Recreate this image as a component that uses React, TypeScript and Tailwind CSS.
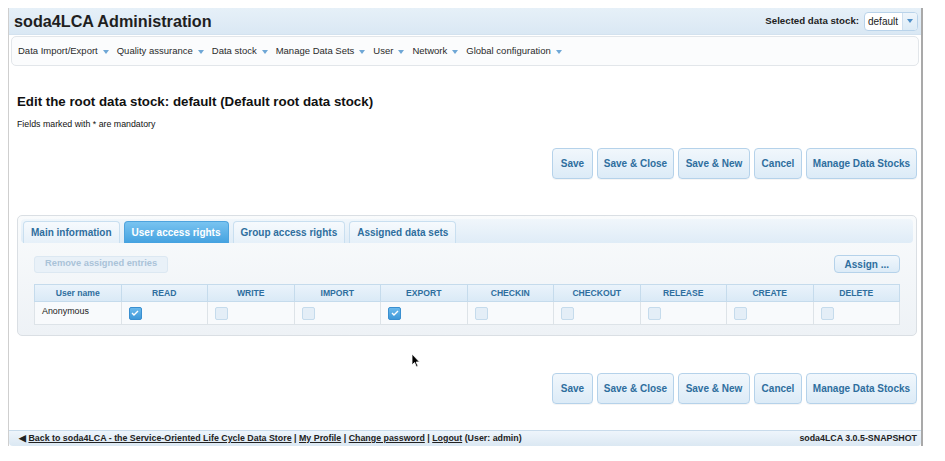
import React from 'react';

const menu = [
  'Data Import/Export',
  'Quality assurance',
  'Data stock',
  'Manage Data Sets',
  'User',
  'Network',
  'Global configuration',
];

const actions = [
  { label: 'Save', w: 'w-[41px]' },
  { label: 'Save & Close', w: 'w-[77px]' },
  { label: 'Save & New', w: 'w-[72px]' },
  { label: 'Cancel', w: 'w-[48px]' },
  { label: 'Manage Data Stocks', w: 'w-[111px]' },
];

const tabs = ['Main information', 'User access rights', 'Group access rights', 'Assigned data sets'];

const rights = ['READ', 'WRITE', 'IMPORT', 'EXPORT', 'CHECKIN', 'CHECKOUT', 'RELEASE', 'CREATE', 'DELETE'];
const granted = ['READ', 'EXPORT'];

function Caret() {
  return (
    <svg width="6" height="4" viewBox="0 0 6 4" className="ml-[5px] mt-[1px]">
      <path d="M0 0h6L3 4z" fill="#6fa7d6" />
    </svg>
  );
}

function ActionButtons() {
  return (
    <div className="flex justify-end gap-[4px] pr-[3px]">
      {actions.map((a) => (
        <button
          key={a.label}
          className={`${a.w} h-[31px] rounded-[4px] border border-[#b5d2ea] bg-[linear-gradient(#f1f7fc,#dcebf7)] text-[10px] font-bold text-[#2e6e9e] shadow-[0_1px_0_rgba(0,0,0,0.04)]`}
        >
          {a.label}
        </button>
      ))}
    </div>
  );
}

function Box({ checked }: { checked: boolean }) {
  if (checked) {
    return (
      <span className="flex h-[13px] w-[13px] items-center justify-center rounded-[2px] border border-[#3a8fd0] bg-[linear-gradient(#6bb9ec,#3e98d8)]">
        <svg width="8" height="6" viewBox="0 0 8 6">
          <path d="M1 3l2 2 4-4" stroke="#fff" strokeWidth="1.4" fill="none" />
        </svg>
      </span>
    );
  }
  return <span className="block h-[13px] w-[13px] rounded-[2px] border border-[#c5dbec] bg-[#e4eef7]" />;
}

export default function App() {
  return (
    <div className="relative h-[461px] w-[945px] bg-white font-['Liberation_Sans',Arial,sans-serif] text-[#222]">
      <div className="ml-[8px] pt-[8px] w-[915px]">
        <div className="flex h-[438px] flex-col border-l border-[#cfcfcf] border-r-2 border-r-[#a9a9a9]">
          {/* header */}
          <div className="flex h-[27px] items-center justify-between border-b border-[#d3e2ef] bg-[linear-gradient(#e6f0f8,#dae8f4)] pl-[5px] pr-[3px]">
            <h1 className="text-[16.2px] font-bold leading-none text-[#1f1f1f]">soda4LCA Administration</h1>
            <div className="flex items-center gap-[5px]">
              <span className="text-[9.7px] font-bold">Selected data stock:</span>
              <div className="flex h-[19px] items-stretch overflow-hidden rounded-[4px] border border-[#b9d3ea] bg-white">
                <span className="w-[38px] border-r border-[#cfdfee] px-[3px] text-[10px] leading-[17px]">default</span>
                <span className="flex w-[14px] items-center justify-center bg-[linear-gradient(#eef5fb,#dcebf6)]">
                  <svg width="6" height="4" viewBox="0 0 6 4">
                    <path d="M0 0h6L3 4z" fill="#4f8fc8" />
                  </svg>
                </span>
              </div>
            </div>
          </div>

          {/* menubar */}
          <div className="mx-[2px] mt-[1px] flex h-[30px] items-center rounded-[5px] border border-[#e2e6ea] bg-[#fbfcfd] pl-[6px]">
            {menu.map((m) => (
              <span key={m} className="mr-[8px] flex items-center text-[9.5px] text-[#2a2a2a]">
                {m}
                <Caret />
              </span>
            ))}
          </div>

          {/* content */}
          <div className="flex-1 pl-[8px] pr-[1px]">
            <h2 className="mt-[27px] text-[13.3px] font-bold leading-[18px] text-[#111]">
              Edit the root data stock: default (Default root data stock)
            </h2>
            <p className="mt-[7px] text-[8.8px] text-[#111]">Fields marked with * are mandatory</p>

            <div className="mt-[17px]">
              <ActionButtons />
            </div>

            {/* tab panel */}
            <div className="mt-[36px] mr-[3px] rounded-[5px] border border-[#dadfe4] bg-[linear-gradient(#f9fbfc,#eef2f6)] p-[3px] pb-[10px]">
              <div className="flex h-[24px] items-end gap-[4px] rounded-[4px] bg-[linear-gradient(#f0f6fb,#dfecf7)] pl-[2px]">
                {tabs.map((t, i) => (
                  <span
                    key={t}
                    className={
                      i === 1
                        ? 'flex h-[22px] items-center rounded-t-[4px] border border-b-0 border-[#4ea3dd] bg-[linear-gradient(#79c3f0,#44a2e0)] px-[7px] text-[10px] font-bold text-white'
                        : 'flex h-[22px] items-center rounded-t-[4px] border border-b-0 border-[#c9dff0] bg-[linear-gradient(#f6fafd,#e6f0f9)] px-[7px] text-[10px] font-bold text-[#2e6e9e]'
                    }
                  >
                    {t}
                  </span>
                ))}
              </div>

              <div className="px-[13px]">
                <div className="mt-[12px] flex items-center justify-between">
                  <span className="flex h-[17px] items-center rounded-[3px] border border-[#dce8f2] bg-[#e9f1f8] px-[10px] text-[9.3px] font-bold text-[#a9c3d8]">
                    Remove assigned entries
                  </span>
                  <span className="flex h-[18px] items-center rounded-[4px] border border-[#b5d2ea] bg-[linear-gradient(#f1f7fc,#dcebf7)] px-[10px] text-[10px] font-bold text-[#2e6e9e]">
                    Assign ...
                  </span>
                </div>

                <table className="mt-[11px] w-full table-fixed border-collapse">
                  <thead>
                    <tr className="bg-[linear-gradient(#eaf3fb,#d9e9f6)]">
                      <th className="h-[17px] border border-[#c5dbec] text-[8.6px] font-bold text-[#2e6e9e]">User name</th>
                      {rights.map((r) => (
                        <th key={r} className="h-[17px] border border-[#c5dbec] text-[8.6px] font-bold text-[#2e6e9e]">
                          {r}
                        </th>
                      ))}
                    </tr>
                  </thead>
                  <tbody>
                    <tr className="bg-[#f8fafc]">
                      <td className="h-[23px] border border-[#dde3e8] pl-[7px] pb-[3px] text-[8.9px] text-[#222]">Anonymous</td>
                      {rights.map((r) => (
                        <td key={r} className="h-[23px] border border-[#dde3e8] pl-[7px]">
                          <Box checked={granted.includes(r)} />
                        </td>
                      ))}
                    </tr>
                  </tbody>
                </table>
              </div>
            </div>

            <div className="mt-[37px]">
              <ActionButtons />
            </div>
          </div>

          {/* footer */}
          <div className="flex h-[16px] items-center justify-between rounded-b-[4px] border-t border-[#c8dbeb] bg-[linear-gradient(#eef5fb,#dbe8f3)] pl-[10px] pr-[4px] text-[8.85px] font-bold text-[#222]">
            <span>
              ◀ <span className="underline">Back to soda4LCA - the Service-Oriented Life Cycle Data Store</span> |{' '}
              <span className="underline">My Profile</span> | <span className="underline">Change password</span> |{' '}
              <span className="underline">Logout</span> (User: admin)
            </span>
            <span>soda4LCA 3.0.5-SNAPSHOT</span>
          </div>
        </div>
      </div>

      {/* mouse cursor */}
      <svg className="absolute left-[411px] top-[353px]" width="10" height="15" viewBox="0 0 10 15">
        <path d="M1 1v11l2.5-2.5 2 4.5 1.6-.7-2-4.3H8.5z" fill="#000" stroke="#fff" strokeWidth="0.8" />
      </svg>
    </div>
  );
}
